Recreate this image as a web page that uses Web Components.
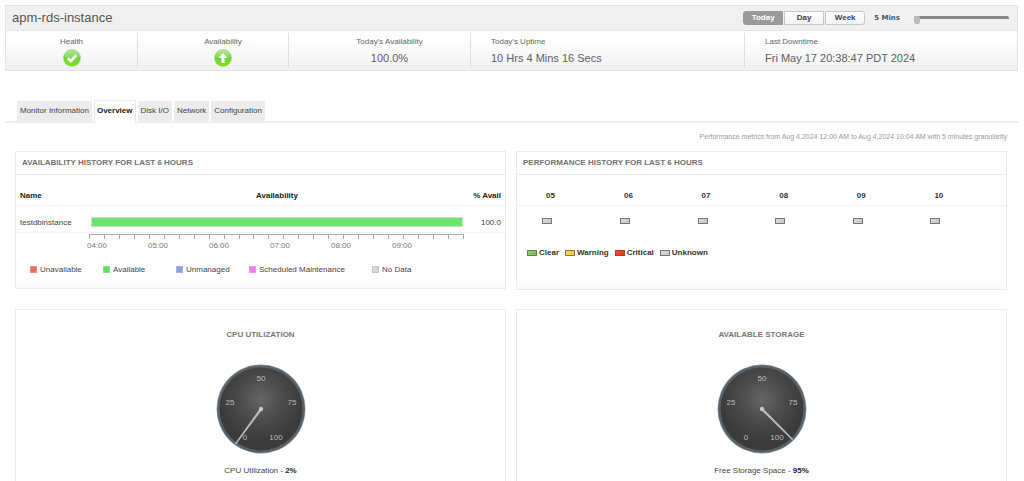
<!DOCTYPE html>
<html lang="en">
<head>
<meta charset="utf-8">
<title>apm-rds-instance</title>
<style>
html { scrollbar-width: none; }
body { margin: 0; background: #fff; color: #444; font: 8px/12px "Liberation Sans", Arial, sans-serif; }
</style>
</head>
<body>
<rds-page></rds-page>
<script>
const BASE = `*,*::before,*::after{box-sizing:border-box}button{font:inherit;color:inherit;margin:0;cursor:pointer}`;
function define(name, css, html) {
  customElements.define(name, class extends HTMLElement {
    connectedCallback() {
      if (this.shadowRoot) return;
      const root = this.attachShadow({ mode: 'open' });
      root.innerHTML = `<style>${BASE}${css}</style>` + (typeof html === 'function' ? html(this) : html);
    }
  });
}

/* Green round status icons */
define('status-icon', `:host{display:block;width:18px;height:18px}svg{display:block}`, el => `
<svg width="18" height="18" viewBox="0 0 18 18" role="img" aria-label="${el.getAttribute('kind')}">
<defs><linearGradient id="g" x1="0" y1="0" x2="0" y2="1"><stop offset="0" stop-color="#a3e283"/><stop offset=".45" stop-color="#6fd13f"/><stop offset="1" stop-color="#83e01c"/></linearGradient></defs>
<circle cx="9" cy="9" r="8.5" fill="url(#g)" stroke="#8ed668" stroke-width=".6"/>
<path d="M1.500 8A7.500 7.200 0 0 1 16.500 8Q9 10 1.500 8z" fill="#fff" opacity=".18"/>
${el.getAttribute('kind') === 'up'
  ? '<path d="M9 4L13.200 8.900H10.500V14H7.500V8.900H4.800z" fill="#fff"/>'
  : '<path d="M4.800 9.300L7.800 12.100L13.200 6.300" fill="none" stroke="#fff" stroke-width="2.600"/>'}
</svg>`);

define('status-cell', `
:host{display:flex;flex-direction:column;align-items:center;padding:3px 0 0 20px;margin:2px 0;border-left:1px solid #dedede;color:#666;white-space:nowrap}
:host([first]){padding-left:0;border-left:0}
:host([start]){align-items:flex-start}
.value{height:20px;display:flex;align-items:center;font-size:11px;color:#606066}`,
`<slot name="label"></slot><div class="value"><slot></slot></div>`);

define('period-picker', `
:host{display:flex;align-items:center}
.group{display:flex;gap:1px}
button{width:40px;height:14px;padding:0 0 1px;border:1px solid #c8c8c8;background:linear-gradient(#fff,#f3f3f3);font-weight:bold;line-height:11px;color:#444}
button:first-child{border-radius:3px 0 0 3px}
button:last-child{border-radius:0 3px 3px 0}
button[aria-pressed=true]{background:#999b9b;border-color:#999b9b;color:#fff}
label{margin-left:9px;font:bold 7px/12px "DejaVu Sans",Verdana,sans-serif;color:#555}
input{appearance:none;-webkit-appearance:none;width:95px;height:8px;margin:3px 0 0 14px;background:none}
input::-webkit-slider-runnable-track{height:8px;border-radius:2px;background:linear-gradient(#858787,#858787) 0 0/100% 3px no-repeat}
input::-webkit-slider-thumb{-webkit-appearance:none;width:6px;height:8px;border-radius:2px;background:#b9bbbb}`,
`<div class="group"><button type="button" aria-pressed="true">Today</button><button type="button">Day</button><button type="button">Week</button></div>
<label for="poll">5 Mins</label><input id="poll" type="range" min="5" max="60" value="5">`);

define('monitor-header', `
:host{display:block;border:1px solid #e4e4e4}
.top{display:flex;align-items:center;justify-content:space-between;height:25px;padding:0 8px 0 6px;background:#f0f0f0;border-bottom:1px solid #e6e6e6}
h1{margin:0;font:13px/16px "Liberation Sans",Arial,sans-serif;color:#555}
.row{display:grid;grid-template-columns:131fr 151fr 182fr 274fr 273fr;height:39px;background:linear-gradient(#fff 20%,#f0f0f0)}`,
`<div class="top"><h1>apm-rds-instance</h1><period-picker></period-picker></div>
<div class="row">
<status-cell first><span slot="label">Health</span><status-icon kind="clear"></status-icon></status-cell>
<status-cell><span slot="label">Availability</span><status-icon kind="up"></status-icon></status-cell>
<status-cell><span slot="label">Today's Availability</span>100.0%</status-cell>
<status-cell start><span slot="label">Today's Uptime</span>10 Hrs 4 Mins 16 Secs</status-cell>
<status-cell start><span slot="label">Last Downtime</span>Fri May 17 20:38:47 PDT 2024</status-cell>
</div>`);

define('tab-bar', `
:host{display:flex;align-items:flex-end;gap:2px;height:23px;padding:0 12px;border-bottom:2px solid #eee}
button{height:20px;padding:0 3px;border:0;background:#ececec;color:#444;white-space:nowrap}
button[aria-selected=true]{height:23px;margin-bottom:-2px;padding:0 2px 2px;background:#fff;border:1px solid #e8e8e8;border-bottom:0;font-weight:bold;color:#222}`,
`<button type="button" role="tab">Monitor Information</button><button type="button" role="tab" aria-selected="true">Overview</button><button type="button" role="tab">Disk I/O</button><button type="button" role="tab">Network</button><button type="button" role="tab">Configuration</button>`);

define('panel-card', `
:host{display:block;border:1px solid #ebebeb;background:linear-gradient(#fff 92%,#fafafa)}
h2{margin:0;height:23px;padding:0 6px;border-bottom:1px solid #ebebeb;font-size:8px;line-height:22px;color:#6e7270}`,
`<h2><slot name="title"></slot></h2><slot></slot>`);

define('availability-history', `
:host{display:block}
table{width:100%;border-collapse:collapse;table-layout:fixed}
th{height:30px;padding:12px 4px 0;color:#222;border-bottom:1px solid #f2f2f2}
td{height:27px;padding:8px 4px 0;border-bottom:1px solid #f2f2f2}
.n{width:72px;text-align:left}.p{text-align:right}
th.p{width:39px;white-space:nowrap;padding-left:0}
td.b{padding:6px 3px 0}
.bar{height:10px;background:#6ae66a;border:1px solid #d4d4d4}
.axis{display:flex;height:5px;margin:1px 41px 0 73px;border-top:1px solid #aaa}
.axis i{flex:1;border-left:1px solid #aaa}
.axis i:last-child{border-right:1px solid #aaa}
.hours{display:grid;grid-template-columns:repeat(6,1fr);margin:1px 52px 0 71px;color:#777}
ul{display:grid;grid-template-columns:73px 73px 73px 123px auto;margin:12px 0;padding:0 0 0 14px;list-style:none}
li{display:flex;align-items:center;gap:3px;white-space:nowrap}
li::before{content:"";width:7px;height:7px;background:var(--c);border:1px solid var(--e)}`,
`<table><thead><tr><th class="n">Name</th><th>Availability</th><th class="p">% Avail</th></tr></thead>
<tbody><tr><td class="n">testdbinstance</td><td class="b"><div class="bar"></div></td><td class="p">100.0</td></tr></tbody></table>
<div class="axis">${'<i></i>'.repeat(25)}</div>
<div class="hours"><span>04:00</span><span>05:00</span><span>06:00</span><span>07:00</span><span>08:00</span><span>09:00</span></div>
<ul><li style="--c:#f26a63;--e:#ec8a84">Unavailable</li><li style="--c:#5fe35f;--e:#8fdc8f">Available</li><li style="--c:#8f9fe3;--e:#a9b2dc">Unmanaged</li><li style="--c:#ee7af4;--e:#e79aea">Scheduled Maintenance</li><li style="--c:#d8d8d8;--e:#c6c6c6">No Data</li></ul>`);

define('state-box', `
:host{display:block;width:10px;height:6px;border:1px solid #777;background:linear-gradient(135deg,var(--a,#ddd),var(--b,#c4c4c4))}
:host([kind=clear]){--a:#98cf6f;--b:#76b84c;border-color:#67844f}
:host([kind=warning]){--a:#ffd76a;--b:#f3bd45;border-color:#8d7844}
:host([kind=critical]){--a:#f4512f;--b:#df3518;border-color:#a2422c}`, ``);

define('performance-history', `
:host{display:block}
table{width:100%;border-collapse:collapse;table-layout:fixed}
th{height:30px;padding:12px 0 0 6px;text-align:left;color:#333;border-bottom:1px solid #f2f2f2}
td{height:32px;padding:0 0 0 2px}
th:first-child{width:101px;padding-left:29px}
td:first-child{padding-left:25px}
ul{display:flex;gap:6px;margin:10px 0 0;padding:0 10px;list-style:none;font-weight:bold;color:#333}
li{display:flex;align-items:center;gap:2px}`,
`<table><thead><tr>${['05','06','07','08','09','10'].map(h => `<th>${h}</th>`).join('')}</tr></thead>
<tbody><tr>${'<td><state-box></state-box></td>'.repeat(6)}</tr></tbody></table>
<ul><li><state-box kind="clear"></state-box>Clear</li><li><state-box kind="warning"></state-box>Warning</li><li><state-box kind="critical"></state-box>Critical</li><li><state-box></state-box>Unknown</li></ul>`);

/* Dial: the scale runs clockwise from 30 degrees past straight down, 3 degrees per percent */
define('gauge-card', `
:host{display:flex;flex-direction:column;align-items:center;height:192px;padding-top:19px;border:1px solid #ebebeb}
h2{margin:0 0 23px;font-size:8px;line-height:12px;color:#777}
svg{display:block}
text{font:8px "Liberation Sans",Arial,sans-serif;fill:#bbb;text-anchor:middle}
p{margin:11px 0 0}
b{color:#222}`, el => `
<h2>${el.getAttribute('heading')}</h2>
<svg width="90" height="90" viewBox="-45 -45 90 90">
<defs><radialGradient id="d" cx=".5" cy=".38" r=".5"><stop offset="0" stop-color="#666"/><stop offset=".5" stop-color="#4c4c4c"/><stop offset="1" stop-color="#3b3b3b"/></radialGradient></defs>
<circle r="44.500" fill="#8c9294"/><circle r="43.800" fill="#596268"/><circle r="41.500" fill="url(#d)"/>
<text x="0" y="-28">50</text><text x="-31" y="-4">25</text><text x="31" y="-4">75</text><text x="-16" y="31">0</text><text x="15" y="31">100</text>
<g transform="rotate(${30 + 3 * el.getAttribute('value')})"><path d="M-1.200 0L-.7 43.500H.7L1.200 0z" fill="#bcbcbc"/></g>
<circle r="2.200" fill="#c8c8c8"/>
</svg>
<p>${el.getAttribute('metric')} - <b>${el.getAttribute('value')}%</b></p>`);

define('rds-page', `
:host{display:block;padding:5px 6px 0 5px}
tab-bar{margin-top:29px}
.note{margin:0;padding:8px 11px;text-align:right;font-size:7px;line-height:12px;color:#999}
.grid{display:grid;grid-template-columns:1fr 1fr;column-gap:10px;row-gap:19px;padding:0 11px 0 10px;align-items:start}
.perf{height:139px}`,
`<monitor-header></monitor-header>
<tab-bar role="tablist"></tab-bar>
<p class="note">Performance metrics from Aug 4,2024 12:00 AM to Aug 4,2024 10:04 AM with 5 minutes granularity</p>
<div class="grid">
<panel-card><span slot="title">AVAILABILITY HISTORY FOR LAST 6 HOURS</span><availability-history></availability-history></panel-card>
<panel-card class="perf"><span slot="title">PERFORMANCE HISTORY FOR LAST 6 HOURS</span><performance-history></performance-history></panel-card>
<gauge-card heading="CPU UTILIZATION" metric="CPU Utilization" value="2"></gauge-card>
<gauge-card heading="AVAILABLE STORAGE" metric="Free Storage Space" value="95"></gauge-card>
</div>`);
</script>
</body>
</html>
